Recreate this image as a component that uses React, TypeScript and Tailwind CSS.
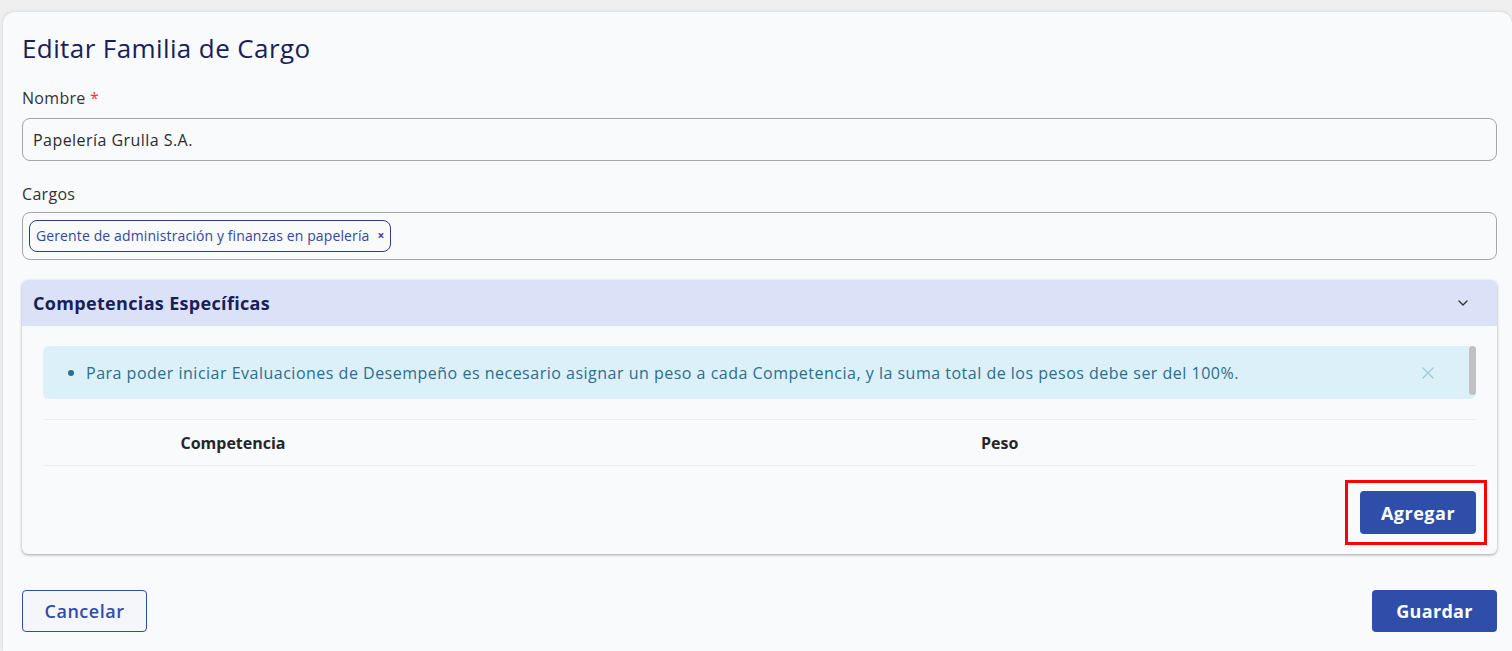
import { ChevronDown, X } from 'lucide-react';

const font = { fontFamily: '"Open Sans", Lato, sans-serif' };

export default function App() {
  return (
    <div className="min-h-screen bg-[#efefef] pt-3 pl-[3px]" style={font}>
      <div className="min-h-[639px] rounded-tl-xl rounded-tr-xl bg-[#f9fafc] shadow-[0_0_4px_rgba(0,0,0,0.12)] pl-[19px] pr-[15px] pt-[20px]">
        <h1 className="text-[26px] leading-8 tracking-[0.4px] text-[#18205a] mb-[24px]">Editar Familia de Cargo</h1>

        <label className="block text-base tracking-[0.3px] text-[#333] leading-5 mb-[10px]">
          Nombre <span className="text-[#e53935]">*</span>
        </label>
        <div className="h-[43px] rounded-lg border border-[#a6a6a6] bg-[#f9fafc] flex items-center px-[10px] text-base tracking-[0.45px] text-[#2b2b2b] mb-[23px]">
          Papelería Grulla S.A.
        </div>

        <label className="block text-base tracking-[0.3px] text-[#333] leading-5 mb-[8px]">Cargos</label>
        <div className="h-[48px] rounded-lg border border-[#a6a6a6] bg-[#f9fafc] flex items-center px-[6px] mb-[20px]">
          <span className="flex items-center gap-2 h-[32px] rounded-lg border border-[#2d3c8c] px-[6px] text-sm tracking-[0.12px] text-[#34479e]">
            Gerente de administración y finanzas en papelería
            <span className="text-xs font-bold">×</span>
          </span>
        </div>

        <section className="rounded-md bg-[#f9fafc] shadow-[0_1px_3px_rgba(0,0,0,0.35)] overflow-hidden">
          <div className="h-[46px] bg-[#dbe2f8] flex items-center justify-between pl-[11px] pr-[26px]">
            <h2 className="text-lg font-bold tracking-[0.33px] text-[#18205a]">Competencias Específicas</h2>
            <ChevronDown className="w-4 h-4 text-[#333]" strokeWidth={2} />
          </div>

          <div className="px-[21px] pt-[20px] pb-[9px]">
            <div className="relative">
              <div className="h-[53px] rounded-md bg-[#dcf0f9] flex items-center justify-between pl-[25px] pr-[38px] text-base tracking-[0.5px] text-[#2a6e90]">
                <div className="flex items-center gap-[12px]">
                  <span className="w-[6px] h-[6px] rounded-full bg-[#2a6e90]" />
                  Para poder iniciar Evaluaciones de Desempeño es necesario asignar un peso a cada Competencia, y la suma total de los pesos debe ser del 100%.
                </div>
                <X className="w-5 h-5 text-[#9ccbd8]" strokeWidth={1.5} />
              </div>
              <div className="absolute right-0 top-0 w-[7px] h-[49px] rounded bg-[#c1c1c1]" />
            </div>

            <div className="mt-[20px] grid grid-cols-[380px_1fr] border-t border-b border-[#ebedf0] h-[47px] items-center text-base font-bold text-[#262626]">
              <div className="text-center">Competencia</div>
              <div className="pl-[558px]">Peso</div>
            </div>

            <div className="flex justify-end mt-[14px] -mr-[11px]">
              <div className="border-[3px] border-[#f00] pl-[12px] pr-[8px] py-[8px]">
                <button className="h-[43px] w-[116px] rounded bg-[#2f4ea9] text-white text-lg font-bold tracking-[0.5px]">Agregar</button>
              </div>
            </div>
          </div>
        </section>

        <div className="flex justify-between mt-[36px]">
          <button className="h-[42px] w-[125px] rounded border border-[#2f4ea9] bg-[#f5f6f9] text-lg font-semibold tracking-[0.5px] text-[#2f4ea9]">Cancelar</button>
          <button className="h-[42px] w-[125px] rounded bg-[#2f4ea9] text-lg font-bold tracking-[0.3px] text-white">Guardar</button>
        </div>
      </div>
    </div>
  );
}
